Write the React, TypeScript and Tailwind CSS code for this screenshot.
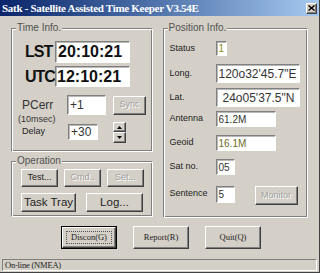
import React from "react";

const FIELD =
    "bg-white border border-t-[#808080] border-l-[#808080] border-r-white border-b-white shadow-[inset_1px_1px_0_#b8b8b8] flex items-center";
const BTN =
    "flex items-center justify-center bg-[#d4d0c8] border border-t-white border-l-white border-r-[#404040] border-b-[#404040] shadow-[inset_-1px_-1px_0_#808080]";
const GROUP =
    "border border-t-[#808080] border-l-[#808080] border-r-white border-b-white shadow-[inset_1px_1px_0_#fff,inset_-1px_-1px_0_#808080] p-0 m-0 min-w-0";
const LEGEND = "ml-[4px] px-[1px] bg-[#d4d0c8] text-[10px] leading-[12px] text-[#505050]";
const OFF = "text-[#a0a0a0] text-shadow-[1px_1px_0_#fff]";

function Spin() {
    return (
        <div className="flex flex-col w-[13px] h-[21px] -mt-[2px] ml-[15px]">
            <div className={`${BTN} h-[10px]`}>
                <svg width="5" height="3" viewBox="0 0 5 3">
                    <path d="M2.5 0 L5 3 L0 3 Z" fill="#000" />
                </svg>
            </div>
            <div className={`${BTN} h-[11px]`}>
                <svg width="5" height="3" viewBox="0 0 5 3">
                    <path d="M0 0 L5 0 L2.5 3 Z" fill="#000" />
                </svg>
            </div>
        </div>
    );
}

function PosRow({
    label,
    mt,
    h,
    w,
    value,
    size,
    pad = "pl-[2px]",
    color = "text-[#333]",
    children,
}: {
    label: string;
    mt: string;
    h: string;
    w: string;
    value: string;
    size: string;
    pad?: string;
    color?: string;
    children?: React.ReactNode;
}) {
    return (
        <div className={`flex items-center pl-[6px] ${mt}`}>
            <span className="w-[46px] text-[9px] text-[#222]">{label}</span>
            <div className={`${FIELD} ${h} ${w} ${pad} ${size} ${color}`}>{value}</div>
            {children}
        </div>
    );
}

export default function App() {
    return (
        <div className="w-[320px] h-[273px] bg-[#d4d0c8] flex flex-col overflow-hidden font-['Liberation_Sans',Arial,sans-serif] border-r border-b border-[#404040]">
            {/* title bar */}
            <div className="h-[16px] flex items-center bg-linear-to-r from-[#0a246a] to-[#a6caf0] pl-[2px] pr-[2px]">
                <span className="flex-1 font-['Liberation_Serif',serif] font-bold text-[11px] tracking-[-0.3px] text-white leading-none">
                    Satk - Satellite Assisted Time Keeper V3.54E
                </span>
                <div className={`${BTN} w-[11px] h-[11px]`}>
                    <svg width="7" height="6" viewBox="0 0 7 6">
                        <path d="M0.5 0.5 L6.5 5.5 M6.5 0.5 L0.5 5.5" stroke="#000" strokeWidth="1.4" />
                    </svg>
                </div>
            </div>

            <div className="flex gap-[10px] px-[11px] pt-[6px]">
                {/* left column */}
                <div className="flex flex-col gap-[3px] w-[142px]">
                    <fieldset className={`${GROUP} h-[130px]`}>
                        <legend className={LEGEND}>Time Info.</legend>
                        <div className="flex items-center mt-[7px] pl-[13px] h-[22px]">
                            <span className="w-[30px] text-[16px] font-bold tracking-[-1px] text-[#111]">LST</span>
                            <div className={`${FIELD} w-[75px] h-[22px] pl-[2px] text-[16px] font-bold text-[#111]`}>20:10:21</div>
                        </div>
                        <div className="flex items-center mt-[3px] pl-[13px] h-[21px]">
                            <span className="w-[30px] text-[16px] font-bold tracking-[-1px] text-[#111]">UTC</span>
                            <div className={`${FIELD} w-[75px] h-[21px] pl-[1px] text-[16px] font-bold text-[#111]`}>12:10:21</div>
                        </div>
                        <div className="flex items-center mt-[8px] pl-[10px] h-[20px]">
                            <span className="w-[45px] text-[12px] text-[#333]">PCerr</span>
                            <div className={`${FIELD} w-[39px] h-[20px] pl-[2px] text-[12px] text-[#333]`}>+1</div>
                            <div className={`${BTN} ml-[7px] w-[33px] h-[19px] text-[9px] ${OFF}`}>Sync</div>
                        </div>
                        <div className="pl-[6px] h-[9px] text-[9px] leading-[9px] text-[#333]">(10msec)</div>
                        <div className="flex items-start pl-[10px] h-[16px]">
                            <div className="flex items-center h-[16px]">
                                <span className="w-[46px] text-[9px] text-[#222]">Delay</span>
                                <div className={`${FIELD} w-[30px] h-[16px] pl-[2px] text-[12px] text-[#333]`}>+30</div>
                            </div>
                            <Spin />
                        </div>
                    </fieldset>

                    <fieldset className={`${GROUP} h-[62px]`}>
                        <legend className={LEGEND}>Operation</legend>
                        <div className="flex gap-[6px] mt-[2px] pl-[9px]">
                            <div className={`${BTN} w-[37px] h-[18px] text-[9px] text-[#222]`}>Test...</div>
                            <div className={`${BTN} w-[37px] h-[18px] text-[9px] ${OFF}`}>Cmd..</div>
                            <div className={`${BTN} w-[37px] h-[18px] text-[9px] ${OFF}`}>Set...</div>
                        </div>
                        <div className="flex gap-[10px] mt-[6px] pl-[9px]">
                            <div className={`${BTN} w-[55px] h-[19px] text-[11.5px] text-[#222]`}>Task Tray</div>
                            <div className={`${BTN} w-[57px] h-[19px] text-[11.5px] text-[#222]`}>Log...</div>
                        </div>
                    </fieldset>
                </div>

                {/* right column */}
                <fieldset className={`${GROUP} w-[146px] h-[196px]`}>
                    <legend className={LEGEND}>Position Info.</legend>
                    <PosRow label="Status" mt="mt-[7px]" h="h-[15px]" w="w-[11px]" value="1" size="text-[10px]" color="text-[#8a8a20]" />
                    <PosRow label="Long." mt="mt-[8px]" h="h-[19px]" w="w-[84px]" value={"120o32'45.7\"E"} size="text-[12px]" />
                    <PosRow label="Lat." mt="mt-[5px]" h="h-[19px]" w="w-[84px]" value={"24o05'37.5\"N"} size="text-[12px]" pad="pl-[6px]" />
                    <PosRow label="Antenna" mt="mt-[4px]" h="h-[16px]" w="w-[60px]" value="61.2M" size="text-[10px]" />
                    <PosRow label="Geoid" mt="mt-[8px]" h="h-[16px]" w="w-[60px]" value="16.1M" size="text-[10px]" color="text-[#6b6b25]" />
                    <PosRow label="Sat no." mt="mt-[8px]" h="h-[16px]" w="w-[19px]" value="05" size="text-[10px]" />
                    <PosRow label="Sentence" mt="mt-[8px]" h="h-[17px]" w="w-[19px]" value="5" size="text-[10px]">
                        <div className={`${BTN} ml-[20px] mt-[3px] w-[43px] h-[19px] text-[9px] ${OFF}`}>Monitor</div>
                    </PosRow>
                </fieldset>
            </div>

            {/* dialog buttons */}
            <div className="flex gap-[16px] pl-[61px] mt-[8px] font-['Liberation_Serif',serif] text-[8.5px] text-[#222]">
                <div className="w-[56px] h-[23px] border border-black">
                    <div className={`${BTN} w-full h-full p-[3px]`}>
                        <span className="flex-1 self-stretch flex items-center justify-center border border-dotted border-[#555]">Discon(G)</span>
                    </div>
                </div>
                <div className={`${BTN} w-[56px] h-[23px]`}>Report(R)</div>
                <div className={`${BTN} w-[56px] h-[23px]`}>Quit(Q)</div>
            </div>

            {/* status bar */}
            <div className="mt-[10px] mx-[2px] h-[12px] flex items-center pl-[2px] border border-t-[#808080] border-l-[#808080] border-r-white border-b-white font-['Liberation_Serif',serif] text-[8.5px] tracking-[-0.2px] text-[#222]">
                On-line (NMEA)
            </div>
        </div>
    );
}
